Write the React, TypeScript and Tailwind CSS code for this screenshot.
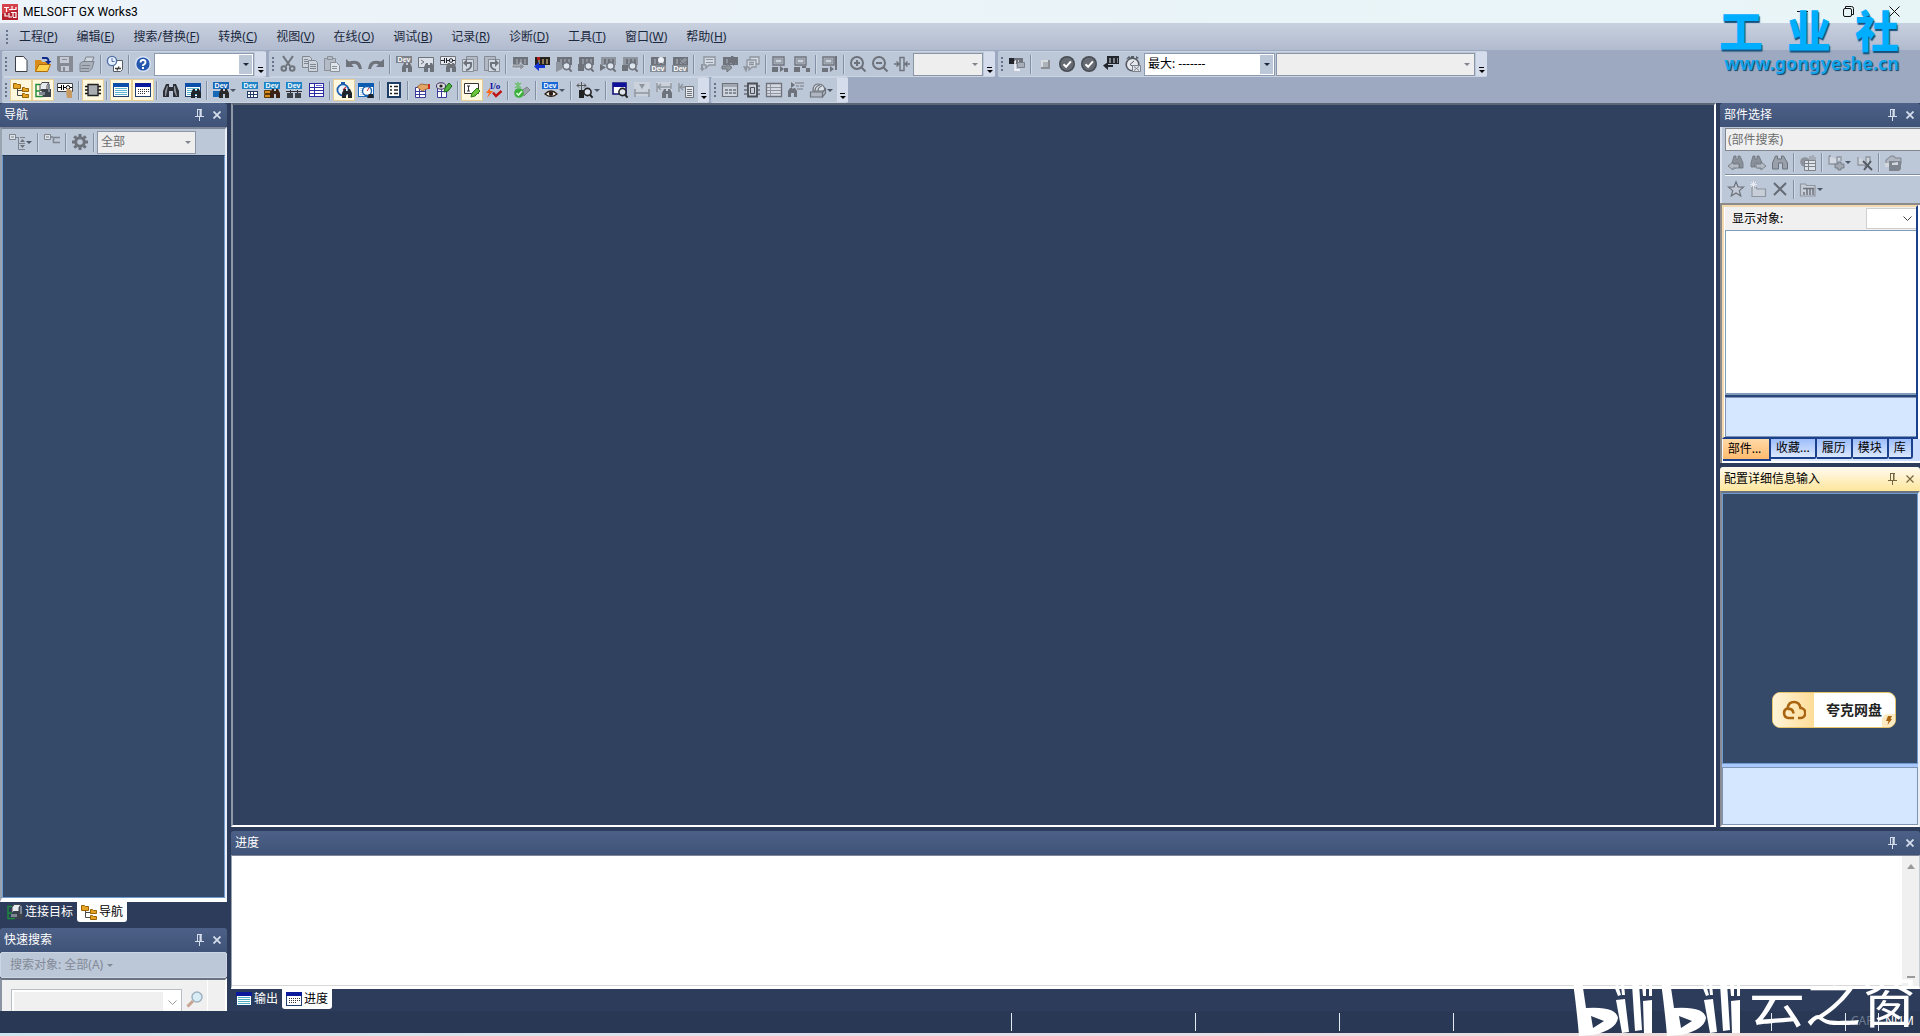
import type { ReactNode } from "react";
import clsx from "clsx";

const G = "#6d727b";
const L = "#8f959f";
const K = "#22262c";

// ---------- shared bits of the toolbar glyphs ----------

const lens = (c = G) => (
  <g fill="#dfe5ee" stroke={c} strokeWidth="1.6">
    <circle cx="10.5" cy="10" r="3.6" />
    <path d="M13 12.8l2.6 2.8" strokeWidth="2" />
  </g>
);

const binoc = (c = G) => <path fill={c} d="M6 16v-5l2-4h2v2h2V7h2l2 4v5h-4v-4h-2v4z" />;

const plc = (c = G, l = L) => (
  <g shapeRendering="crispEdges">
    <path fill={c} d="M1 1h15v8H1z" />
    <path fill={l} d="M4 3h2v5H4zM8 3h2v5H8zM12 3h2v5h-2z" />
  </g>
);

const dev = (c: string, y = 0) => (
  <g>
    <path fill={c} d={`M0 ${y}h16v7H0z`} />
    <text x="8" y={y + 6} textAnchor="middle" fontSize="7" fontWeight="700" fill="#fff" fontFamily="Liberation Sans, sans-serif">
      Dev
    </text>
  </g>
);

const win = (bar = "#0a1a9a", line = "#4f9fc4", dark = "#1f3f6e") => (
  <g shapeRendering="crispEdges">
    <path fill={dark} d="M0 1h16v14H0z" />
    <path fill="#fff" d="M1 5h14v9H1z" />
    <path fill={bar} d="M0 1h16v4H0z" />
    <path stroke={line} d="M2 6.5h12M2 8.5h12M2 10.5h12M2 12.5h12" />
  </g>
);

const check = (
  <g>
    <circle cx="8" cy="8" r="8" fill="#474c53" />
    <circle cx="8" cy="8" r="6.5" fill="#666b73" />
    <path fill="none" stroke="#fff" strokeWidth="2" d="M4.500 8.200l2.600 2.600 4.800-5.400" />
  </g>
);

const monitor = (
  <g fill="none" stroke={G} strokeWidth="1.4">
    <path fill="#c9d1dc" d="M1 1h11v8H1z" />
    <path d="M3 3h7v4H3z" stroke={L} />
  </g>
);

const icons: Record<string, ReactNode> = {
  new: <path fill="#fff" stroke="#3b3f47" d="M2.5.5h8l3.5 4v11H2.5z" />,
  open: (
    <g>
      <path fill="#d98b1c" d="M0 4h6l1 2h6v9H0z" />
      <path fill="#ffd24d" stroke="#b06c0b" d="M.5 15.5L4 8.500h11.500l-3 7z" />
      <path fill="none" stroke="#0d2a8c" strokeWidth="2" d="M7 2h4q2.500 0 2.500 4" />
      <path fill="#0d2a8c" d="M10 5h6.500l-3.200 3.500z" />
    </g>
  ),
  save: (
    <g>
      <path fill="#868b93" d="M0 0h16v16H2l-2-2z" />
      <path fill="#c3cad5" d="M3 1h9v6H3zM4 10h8v5H4z" />
      <path fill="#868b93" d="M5 3h5v1H5zM6 11h2v4H6z" />
    </g>
  ),
  print: (
    <g stroke="#7d838c" fill="#cfd5de">
      <path d="M5 6l2-5h8l-2 5z" />
      <path d="M1 7.500l3-2h11l-2 7-3 3H1z" fill="#a9b0ba" />
      <path d="M3 9.500h8M2 12.500h8" />
    </g>
  ),
  recent: (
    <g>
      <path fill="#fff" stroke="#555b66" d="M6.5 4.5h9v9l-2 2h-7z" />
      <circle cx="5" cy="5" r="4.600" fill="#e7f0ff" stroke="#5270a6" strokeWidth="1.400" />
      <path fill="none" stroke="#5270a6" d="M5 2v3.500h2.500" />
      <path fill="none" stroke="#444" strokeWidth="1.300" d="M8 12.500h6M12 10.500l-2 4" />
    </g>
  ),
  help: (
    <g>
      <circle cx="8" cy="8" r="8" fill="#d9e4f7" />
      <circle cx="8" cy="8" r="6.600" fill="#2456b0" />
      <path fill="none" stroke="#fff" strokeWidth="1.800" d="M5.500 6.500q0-2.500 2.500-2.500t2.500 2-2.500 3v1" />
      <path fill="#fff" d="M7 11h2v2H7z" />
    </g>
  ),
  cut: (
    <g fill="none" stroke={G} strokeWidth="2">
      <path d="M3 0l7 10M13 0L6 10" />
      <circle cx="3.800" cy="12.500" r="2.300" />
      <circle cx="12.200" cy="12.500" r="2.300" />
    </g>
  ),
  copy: (
    <g fill="#ccd3dd" stroke="#81878f">
      <path d="M.5.5h7l2 2v9h-9z" />
      <path d="M6.500 4.500h7l2 2v9h-9z" />
      <path d="M8 8.500h6M8 10.500h6M8 12.500h6M2 3.500h4M2 5.500h4M2 7.500h4" />
    </g>
  ),
  paste: (
    <g stroke="#8b9199" fill="#b5bcc7">
      <path d="M.5 2.500h11v12H.5z" />
      <path d="M3.500.5h5v3h-5z" />
      <path fill="#dfe4eb" d="M6.500 6.500h6l3 3v6h-9z" />
      <path d="M8 10.500h5M8 12.500h5" />
    </g>
  ),
  undo: <path fill={G} d="M0 3v8h8L5.500 8.500Q11 6 13 13h3Q15 2 3 5.500z" />,
  redo: <path fill={G} d="M16 3v8H8l2.500-2.500Q5 6 3 13H0Q1 2 13 5.500z" />,
  devFind: <g>{dev("#7d828b")}{binoc()}</g>,
  cmdFind: (
    <g>
      <path fill="#dde2ea" stroke={G} d="M.5 1.500h15v10H.5z" />
      <path fill="none" stroke={G} d="M3 4l3 2-3 2M7 8.500h3" />
      {binoc()}
    </g>
  ),
  ladFind: (
    <g>
      <path fill="#e6e9ef" stroke={G} d="M.5.5h15v8H.5z" />
      <path fill="none" stroke={K} d="M1 4.500h3M4.500 2v5M6.500 2v5M7 4.500h3M12 4.500h3" />
      <circle cx="11" cy="4.500" r="1.800" fill="none" stroke={K} />
      {binoc()}
    </g>
  ),
  backDoc: (
    <g>
      <path fill="#b3bac5" stroke="#868c95" d="M4.500.5h11v14h-11z" />
      <path fill="#d4dae3" stroke="#868c95" d="M.5 3.500h11v12H.5z" />
      <path fill="none" stroke={G} strokeWidth="2" d="M4 14q6-1 5-7H4" />
      <path fill={G} d="M5 3v8L1 7z" />
    </g>
  ),
  fwdDoc: (
    <g>
      <path fill="#b3bac5" stroke="#868c95" d="M.5.5h11v14H.5z" />
      <path fill="#d4dae3" stroke="#868c95" d="M4.500 3.500h11v12h-11z" />
      <path fill="none" stroke={G} strokeWidth="2" d="M12 14q-6-1-5-7h5" />
      <path fill={G} d="M11 3v8l4-4z" />
    </g>
  ),
  plcWrite: (
    <g>
      {plc()}
      <path fill={L} d="M0 9h8V6.500l5 4-5 4V12H0z" stroke="#dfe4eb" strokeWidth=".6" />
    </g>
  ),
  plcRead: (
    <g>
      {plc("#26221c", "#8c7a5c")}
      <path fill="#b01c1c" d="M3 1h3v3H3z" />
      <path fill="#1234d6" d="M11 9H5V6l-5 4.500L5 15v-3h6z" />
    </g>
  ),
  plcWatch1: <g>{plc()}<path fill={L} d="M0 6h6v7l-6 3z" />{lens()}</g>,
  plcWatch2: <g>{plc()}<path fill={G} d="M0 8h6v7H0z" />{lens()}</g>,
  plcWatch3: <g>{plc(L, G)}<path fill={G} d="M0 8l6 3.500L0 15z" />{lens()}</g>,
  plcWatch4: <g>{plc(L, G)}<path fill={G} d="M0 9h6v6H0z" />{lens()}</g>,
  devSnap: <g>{plc()}<circle cx="11" cy="4" r="3" fill="#eef1f5" />{dev("#858b94", 9)}</g>,
  devEdit: <g>{plc()}<path fill={L} stroke={G} d="M8 5l5-4 3 3-5 4z" />{dev("#858b94", 9)}</g>,
  comment1: (
    <g>
      <path fill="#d5dbe4" stroke={L} strokeWidth="1.400" d="M4 1h11v8H9l-3 3V9H4z" />
      <path stroke={L} d="M6 3.500h7M6 6.500h7" />
      <path fill={L} d="M1 8h2v4h2l-3 3.500L0 12h1z" />
    </g>
  ),
  comment2: (
    <g>
      {plc()}
      <path fill={L} stroke={G} d="M0 10h5V7l5 4.500L5 16v-3H0z" />
      <path fill={G} d="M9 0h2l5 5-5 5V7H8V3h1z" />
    </g>
  ),
  comment3: (
    <g fill="#d5dbe4" stroke={L} strokeWidth="1.300">
      <path d="M6 1h9v7H6z" />
      <path d="M3 4h9v7H8l-3 3v-3H3z" />
      <path d="M5 6.500h5M5 8.500h5" />
      <path fill={L} d="M0 11h3l-1 4z" />
    </g>
  ),
  mon1: <g>{monitor}<path fill={G} d="M0 11h6v5H0zM8 10l4 3-4 3zM12 12h4v4h-4z" /></g>,
  mon2: <g>{monitor}<path fill={G} d="M0 11h6v5H0zM8 10h4v2H8zM12 12h4v4h-4z" /></g>,
  mon3: <g>{monitor}<path fill={G} d="M0 12h6v4H0zM8 10l4 3-4 3zM13 0h2v14h-2z" /></g>,
  zoomIn: (
    <g fill="none" stroke={G} strokeWidth="2">
      <circle cx="7" cy="7" r="6" />
      <path d="M4 7h6M7 4v6M11.500 11.500L15.500 15.500" />
    </g>
  ),
  zoomOut: (
    <g fill="none" stroke={G} strokeWidth="2">
      <circle cx="7" cy="7" r="6" />
      <path d="M4 7h6M11.500 11.500L15.500 15.500" />
    </g>
  ),
  fitWidth: (
    <path
      fill="none"
      stroke={G}
      strokeWidth="1.400"
      d="M6 1.500h4v13H6zM0 8h5M16 8h-5M2.500 5.500L5 8l-2.500 2.500M13.500 5.500L11 8l2.500 2.500"
    />
  ),
  plcLink: (
    <g>
      <path fill={K} d="M0 2h5v6H0z" />
      <path fill={G} d="M5 2h9v6H5z" />
      <path fill="#c9cfd8" d="M6 4h1v3H6zM9 4h1v3H9z" />
      <path fill="#a7aeb8" stroke="#7b818a" d="M8.500 6.500h7v5h-7z" />
      <path fill="none" stroke="#fff" strokeWidth="1.300" d="M6 5v9h5" />
    </g>
  ),
  stop: (
    <g>
      <path fill="#8a8f96" d="M4 4h9v9H4z" />
      <path fill="#d8dbe0" d="M4 4h7v7H4z" />
      <path fill="#aeb3ba" d="M6 6h5v5H6z" />
    </g>
  ),
  ok: check,
  plcBack: (
    <g>
      <path fill={K} d="M4 0h12v8H4z" />
      <path fill="#7e848c" d="M6 2h2v5H6zM10 2h2v5h-2zM14 2h1v5h-1z" />
      <path fill={K} d="M10 9H5V6L0 9.500 5 14v-3h5z" />
    </g>
  ),
  clockX: (
    <g>
      <path fill="#555b63" d="M1 3l3-3 2 2zM11 0l3 2-3 1zM6 0h3v2H6z" />
      <circle cx="7.500" cy="8.500" r="6.300" fill="#e5e8ed" stroke="#555b63" strokeWidth="1.600" />
      <path fill="none" stroke="#555b63" d="M9 5L5 8.500l3 2" />
      <path fill="#dfe3e9" stroke="#7d838c" d="M7.500 9.500h8v6h-8zM9 10.500l5 4M14 10.500l-5 4" />
    </g>
  ),
  tree: (
    <g>
      <path fill="none" stroke="#4a4a4a" d="M4.500 6v7.500h6M4.500 8.500h6" />
      <path fill="#e6a423" stroke="#9a6206" d="M.5 1.500h3l1 1h3v4h-7zM9.500 5.500h2l1 1h3v3h-6zM9.500 11.500h2l1 1h3v3h-6z" />
    </g>
  ),
  connect: (
    <g>
      <path fill="none" stroke="#1d8a3c" strokeWidth="1.400" d="M5 2.500H1v12h7M1 9h4" />
      <path fill="#e9ecef" stroke="#444a52" d="M5 3.500L7 .5h7l-2 3v5H5z" />
      <path fill="#3c424b" d="M6 7h10v8H8z" />
      <path fill="#7d8691" d="M13 2h2v8h-2zM4 10h6v3H4z" />
    </g>
  ),
  ladderHand: (
    <g>
      <path fill="#fff" stroke="#444" d="M.5 1.500h15v8H.5z" />
      <path fill="none" stroke="#000" d="M1 5.500h3M4.500 3v5M6.500 3v5M7 5.500h2M13 5.500h2" />
      <circle cx="11" cy="5.500" r="1.900" fill="none" stroke="#000" />
      <path fill="#c79a62" d="M9 9l2-3 4 3v7h-5z" />
    </g>
  ),
  chip: (
    <g>
      <path stroke="#111" strokeWidth="1.600" d="M0 4.500h16M0 8h16M0 11.500h16" />
      <path fill="#a9adb2" stroke="#222" strokeWidth="1.400" d="M3 2.500h10v11H3z" />
    </g>
  ),
  winLines: win("#0b4fa8", "#5fb4d0"),
  winDots: (
    <g>
      {win("#0a1a9a", "#fff")}
      <path fill="none" stroke="#333" strokeDasharray="1 1" d="M3 7.500h11M3 9.500h11M3 11.500h8" />
    </g>
  ),
  winOutput: win("#0a1a9a", "#4fb0c4"),
  binoc: (
    <g>
      <path fill="#2c3036" d="M0 15V9l3-7h3v3h4V2h3l3 7v6h-6V9H6v6z" />
      <path fill="#8e949c" d="M2 9l2-5h1L3 14H2zM11 9V4h1l2 10h-1z" />
    </g>
  ),
  winFind: <g>{win("#0b4fa8", "#5fb4d0")}{binoc("#1f242b")}</g>,
  devMenu: <g>{dev("#1767b8")}<path fill="#1767b8" d="M0 9h8v6H0z" />{binoc("#2a2a2a")}</g>,
  devGrid: (
    <g>
      {dev("#1b83c6")}
      <path fill="#223c66" d="M5 9h11v7H5z" />
      <path fill="#fff" d="M6 10h2v2H6zM9 10h2v2H9zM12 10h3v2h-3zM6 13h2v2H6zM9 13h2v2H9zM12 13h3v2h-3z" />
    </g>
  ),
  devFolders: (
    <g>
      {dev("#1b83c6")}
      <path fill="#d98a1f" stroke="#5d3a06" d="M.5 8.500h6v3h-6zM.5 12.500h6v3h-6z" />
      {binoc("#3b2214")}
    </g>
  ),
  devNet: (
    <g>
      {dev("#1b83c6")}
      <path stroke="#2c3036" d="M0 9.500h16M4.500 8v4M11.500 8v4" />
      <path fill="#3a4048" d="M1 11h6v5H1zM9 11h6v5H9z" />
    </g>
  ),
  tableIcon: (
    <g shapeRendering="crispEdges">
      <path fill="#2a2ba0" d="M1 1h15v14H1z" />
      <path fill="#fff" d="M2 2h4v3H2zM7 2h8v3H7zM2 6h4v2H2zM7 6h8v2H7zM2 9h4v2H2zM7 9h8v2H7zM2 12h4v2H2zM7 12h8v2H7z" />
      <path fill="#6a6ad0" d="M8 3h6v1H8z" />
    </g>
  ),
  clockFind: (
    <g>
      <path fill="#1d5fae" d="M5 0h4v2H5z" />
      <circle cx="7" cy="8" r="5.600" fill="#eaf4ff" stroke="#1d5fae" strokeWidth="1.800" />
      <path stroke="#c33" strokeWidth="1.200" d="M7 8l3-3" />
      {binoc("#1f242b")}
    </g>
  ),
  winClock: (
    <g>
      {win("#0b5bb0", "#b9d6ea", "#1a6ac0")}
      <circle cx="9" cy="9" r="4.500" fill="#fff" stroke="#1d5fae" strokeWidth="1.400" />
      <path stroke="#c33" d="M9 9l2-3" />
      <path fill="#1f242b" d="M9 16l2-4h4l1 4z" />
    </g>
  ),
  listIcon: (
    <g>
      <path fill="#fff" stroke="#1d3d66" strokeWidth="2" d="M2 1h12v14H2z" />
      <path fill="none" stroke="#222" strokeWidth="1.400" d="M4 4.500h2M4 8h2M4 11.500h2M8 4.500h4M8 8h4M8 11.500h4" />
    </g>
  ),
  propsHand: (
    <g>
      <path fill="#fff" stroke="#3a3a9c" d="M1.500 5.500h10v10h-10zM1 9.500h10M5.500 6v9M1 12.500h10" />
      <path fill="#e2a565" stroke="#8c4f19" strokeWidth=".7" d="M3 5l4-3 8 1v3l-7 3z" />
      <path fill="#d02a1e" d="M14 2h2v5h-2z" />
    </g>
  ),
  eyePen: (
    <g>
      <path fill="#fff" stroke="#3a3a9c" d="M1.500 5.500h9v10h-9zM1 9.500h9M5.500 6v9" />
      <ellipse cx="5" cy="4" rx="4.500" ry="3.200" fill="#ddd" stroke="#3b2f66" />
      <circle cx="5" cy="4" r="1.600" fill="#222" />
      <path fill="#4db33d" stroke="#1c661b" d="M8 10l1-4 4-5 3 3-4 5z" />
    </g>
  ),
  boxPen: (
    <g>
      <path fill="#fff" stroke="#333" d="M.5 1.500h14v10H.5z" />
      <path stroke="#333" d="M4.500 4v5M3 4h3M3 9h3" />
      <path fill="#6cc43c" stroke="#2a7a17" d="M7 15l1-4 5-5 3 3-5 5z" />
    </g>
  ),
  ioCheck: (
    <g>
      <text x="9" y="7" textAnchor="middle" fontSize="9" fontWeight="700" fill="#1414a0" fontFamily="Liberation Serif, serif">
        I/o
      </text>
      <path fill="#ff6a1a" d="M4 6L0 11h3l-2 5 6-7H4z" />
      <path fill="none" stroke="#c01515" strokeWidth="2.400" d="M7 10.500l3 3.500 5.500-5" />
    </g>
  ),
  greenCheck: (
    <g>
      <path fill="#9aa1a9" stroke="#6b7178" strokeWidth=".7" d="M7 9l6-4 3 3-6 6z" />
      <circle cx="5" cy="11" r="4.800" fill="#3cae3c" />
      <path fill="none" stroke="#d9ffd9" strokeWidth="1.600" d="M2.500 11l2 2 3.500-4" />
      <path stroke="#6fc06f" strokeWidth="1.600" d="M1 1l6 5M7 1L1 6M4 0v6" />
    </g>
  ),
  devEye: (
    <g>
      {dev("#1767d8")}
      <path fill="#fff" stroke="#2b1d12" strokeWidth="1.200" d="M3 12q6-6 12 0-6 5-12 0z" />
      <circle cx="9" cy="11.800" r="2.200" fill="#2b1d12" />
    </g>
  ),
  ampLens: (
    <g>
      <path fill="none" stroke="#555" d="M4.500 0v8M0 3.500h9M2 1.500l-2 2 2 2M7 1.500l2 2-2 2" />
      <path fill="#222" d="M2 8h5v8H2z" />
      {lens("#222")}
    </g>
  ),
  winLens: (
    <g>
      <path fill="#fff" stroke="#10107a" strokeWidth="1.600" d="M1 1h13v11H1z" />
      <path fill="#10109a" d="M1 1h13v4H1z" />
      {lens("#222")}
    </g>
  ),
  span: (
    <g>
      <path fill="#ccd2dc" d="M0 0h16v14H0z" />
      <path stroke={L} strokeWidth="1.500" d="M1 7v8M15 7v8M1 11h14" />
      <path fill={L} d="M5 2h6L8 7z" />
    </g>
  ),
  spanFind: (
    <g>
      <path fill="#ccd2dc" d="M0 0h16v9H0z" />
      <path fill="none" stroke={L} strokeWidth="1.400" d="M1 1v9M1 5h14M5 2L2 5l3 3M15 1v6" />
      {binoc()}
    </g>
  ),
  spanList: (
    <g>
      <path fill="none" stroke={L} strokeWidth="1.400" d="M1 1v9M1 5h8M5 2L2 5l3 3" />
      <path fill="#e6e9ee" stroke={G} d="M7.500 4.500h8v11h-8zM9 7.500h5M9 9.500h5M9 11.500h5M9 13.500h5" />
    </g>
  ),
  modTable: (
    <g>
      <path fill="#cfd5de" stroke={G} strokeWidth="1.200" d="M.5 1.500h15v13H.5z" />
      <path fill="#a1a8b2" d="M1 2h14v3H1z" />
      <path stroke={G} strokeDasharray="3 1" strokeWidth="1.500" d="M3 8h11M3 11h11" />
    </g>
  ),
  modChip: (
    <g>
      <path stroke={G} strokeWidth="1.500" d="M0 4h16M0 8h16M0 12h16" />
      <path fill="#c9cfd9" stroke="#4a4f57" strokeWidth="1.800" d="M4 1.500h9v13H4z" />
      <path fill="none" stroke="#4a4f57" d="M6.500 5.500h4v6h-4z" />
    </g>
  ),
  modList: (
    <g>
      <path fill="#d5dae2" stroke={G} strokeWidth="1.300" d="M.5 1.500h15v13H.5z" />
      <path stroke={L} d="M1 5.500h14M1 8.500h14M1 11.500h14M4.500 2v12" />
    </g>
  ),
  modFind: (
    <g>
      <path fill={G} d="M0 15V9l2-3h2l1 1 1-1h1l2 3v6H6v-4H3v4zM3 0l4 3-4 3z" />
      <path stroke={L} strokeWidth="1.300" d="M7 1h9M8 4h3M12 4h4M9 7h6" />
    </g>
  ),
  modBox: (
    <g fill="#d9dee6" stroke={G} strokeWidth="1.200">
      <path d="M3 9q0-7 5-7 7 0 7 7z" />
      <path d="M8 9q0-4 4-5M5 9q0-5 5-6" fill="none" />
      <path d="M.5 10h12v5H.5zM12.500 10l3-3v4l-3 4z" fill="#b0b7c2" />
    </g>
  ),
  expand: (
    <g fill="none" stroke="#7f858e">
      <path fill="#dfe3ea" d="M.5.5h6v5h-6zM2 3h3" />
      <path d="M7 3.500h2.500v12H12M9.500 9.500H12M11 3.500h5M11 9.500h5M12 15.500h4" />
      <path fill={G} d="M11 8l2.500-3L16 8zM11 11l2.500 3 2.500-3z" stroke="none" />
    </g>
  ),
  collapse: (
    <g fill="none" stroke="#7f858e">
      <path fill="#dfe3ea" d="M.5.5h6v5h-6zM2 3h3" />
      <path strokeWidth="1.500" d="M7 3h2M16 3.500H9.500v5H16" />
    </g>
  ),
  gear: (
    <g>
      <circle cx="8" cy="8" r="4.300" fill="none" stroke={G} strokeWidth="3" />
      <path stroke={G} strokeWidth="3" d="M8 0v3M8 13v3M0 8h3M13 8h3M2.300 2.300l2 2M11.700 11.700l2 2M2.300 13.700l2-2M11.700 4.300l2-2" />
    </g>
  ),
  findPrev: (
    <g fill="#8b919a" stroke="#6d737c" strokeWidth=".8">
      <path d="M4 8l2-7h2v3h2V1h2l3 7v5h-4V8H8v5H6z" />
      <path fill="#b4bac4" d="M0 11l5-4v2h6v4H5v2z" />
    </g>
  ),
  findNext: (
    <g fill="#8b919a" stroke="#6d737c" strokeWidth=".8">
      <path d="M1 8l2-7h2v3h2V1h2l3 7v5H8V8H5v4H1z" />
      <path fill="#b4bac4" d="M16 11l-5-4v2H6v4h5v2z" />
    </g>
  ),
  findAll: <path fill="#9aa0a9" stroke="#6d737c" d="M.5 14V8l3-7h2v3h4V1h2l4 7v6h-5V8h-4v6z" />,
  globeGrid: (
    <g>
      <circle cx="5" cy="7" r="4.800" fill="#8d939c" />
      <path fill="#a5abb4" d="M9 1h3V0h2v2h2v3H9z" />
      <path fill="#dfe3e9" stroke="#7d838b" d="M4.500 5.500h11v10h-11zM5 8.500h10M5 11.500h10M8.500 6v9" />
    </g>
  ),
  addTo: (
    <g>
      <path fill="#d3d9e2" stroke={L} strokeWidth="1.300" d="M1 1v8h6l2 3V2h4v4M1 1h2" />
      <path fill="#a3a9b2" stroke={G} strokeWidth=".8" d="M7 9h3V7h3v2h3v4h-3v2h-3v-2H7z" />
    </g>
  ),
  delFrom: (
    <g>
      <path fill="#cdd4dd" stroke={L} strokeWidth="1.300" d="M1 2v8h6l2 2V2h4v6" />
      <path stroke="#555b63" strokeWidth="2" d="M6 6l9 9M14 6l-7 9" />
    </g>
  ),
  boxDark: (
    <g>
      <path fill="#b0b6c0" stroke="#7d838b" d="M1 5l5-4h3l1 2h6v6H1z" />
      <path fill="#7f858e" d="M4 6h12v8l-2 2H4z" />
      <path fill="#d3d8df" d="M0 8h4v4H0zM7 8l6-1v3H7z" />
    </g>
  ),
  star: <path fill="#c3cad5" stroke={G} strokeWidth="1.200" d="M8 .8l2 5 5.500.3-4.200 3.500 1.400 5.400L8 12l-4.700 3 1.400-5.400L.5 6.100 6 5.800z" />,
  folder: (
    <g>
      <path fill="#c8ced8" stroke={L} strokeWidth="1.200" d="M2 6h4l1 2h8.500v7.500H2z" />
      <path stroke="#e6eaf0" d="M0 3.500h7M3.500 0v7M1 1l5 5M6 1L1 6" />
    </g>
  ),
  cross: <path stroke="#666c75" strokeWidth="2" d="M2 2l12 12M14 2L2 14" />,
  folderChart: (
    <g>
      <path fill="#c8ced8" stroke={L} strokeWidth="1.200" d="M.5 3h5l1 1.500H15V15H.5z" />
      <path stroke={G} strokeWidth="1.500" d="M4 14v-3M7 14V8M10 14V7M13 14V7M3 7.500h11" />
    </g>
  ),
};

function Icon({ name }: { name: string }) {
  return (
    <svg viewBox="0 0 16 16" className="h-4 w-4 shrink-0 overflow-visible" fill="none" aria-hidden="true">
      {icons[name]}
    </svg>
  );
}

// ---------- toolbar building blocks ----------

// "|" is a separator, "*" marks a pressed toggle, "+" a drop-down button
type Item = string;

function Caret({ className = "text-[#4d5766]" }: { className?: string }) {
  return (
    <svg viewBox="0 0 6 3" className={clsx("h-[3px] w-[6px] shrink-0", className)} aria-hidden="true">
      <path fill="currentColor" d="M0 0h6L3 3z" />
    </svg>
  );
}

function Tools({ items }: { items: Item[] }) {
  return (
    <>
      {items.map((item, i) => {
        if (item === "|") {
          return <span key={i} className="mx-[2px] h-[19px] w-[2px] shrink-0 border-l border-[#8290a6] border-r border-r-[#cfd8e5]" />;
        }
        const pressed = item.startsWith("*");
        const drop = item.startsWith("+");
        const name = item.replace(/^[*+]/, "");
        return (
          <button
            key={i}
            type="button"
            aria-label={name}
            aria-pressed={pressed || undefined}
            className={clsx(
              "flex h-[22px] shrink-0 items-center justify-center",
              drop ? "w-[29px] gap-px" : "w-[22px]",
              pressed && "border border-[#e5cf94] bg-[#fff8de]"
            )}
          >
            <Icon name={name} />
            {drop && <Caret />}
          </button>
        );
      })}
    </>
  );
}

function Grip() {
  return (
    <span className="flex w-[8px] shrink-0 flex-col items-center gap-[2px]">
      {[0, 1, 2, 3].map((n) => (
        <span key={n} className="h-[2px] w-[2px] bg-[#66758c]" />
      ))}
    </span>
  );
}

function Toolbar({ children }: { children: ReactNode }) {
  return (
    <div role="toolbar" className="flex h-[26px] shrink-0 items-center rounded-[2px] border-y border-[#cbd4e2] bg-[#bcc7d8]">
      <Grip />
      {children}
      <button type="button" aria-label="more" className="ml-px flex h-full w-[11px] flex-col items-center justify-end gap-[2px] bg-[#d5dceb] pb-[3px]">
        <span className="h-px w-[5px] bg-black" />
        <Caret className="text-black" />
      </button>
    </div>
  );
}

function Combo({ label, width, value = "", disabled }: { label: string; width: string; value?: string; disabled?: boolean }) {
  return (
    <div className={clsx("flex h-[23px] shrink-0 border", width, disabled ? "border-[#8b95a5] bg-[#eee]" : "border-[#8d9bb0] bg-white")}>
      <select aria-label={label} disabled={disabled} className="min-w-0 flex-1 appearance-none bg-transparent px-[3px] text-[12px] text-black outline-none disabled:opacity-100 disabled:text-[#6d6d6d]">
        <option>{value}</option>
      </select>
      <span className={clsx("my-px mr-px flex w-[13px] items-center justify-center", !disabled && "bg-[#bcc7d8]")}>
        <Caret className={disabled ? "text-[#80858d]" : "text-[#1b2a41]"} />
      </span>
    </div>
  );
}

// ---------- dock panels ----------

function PanelHeader({ title, active }: { title: string; active?: boolean }) {
  return (
    <header
      className={clsx(
        "flex h-[24px] shrink-0 items-center rounded-t-[3px] pl-1 pr-[2px] text-[12px] leading-4",
        active
          ? "bg-linear-to-b from-[#fffaf0] via-[#fff0c5] to-[#ffe69c] text-black"
          : "bg-linear-to-b from-[#4d6087] to-[#3f5277] text-white"
      )}
    >
      <h2 className="flex-1">{title}</h2>
      <button type="button" aria-label="pin" className="flex w-[17px] justify-center">
        <svg viewBox="0 0 9 12" className={clsx("h-[12px] w-[9px]", active ? "text-[#75663f]" : "text-[#d4ddec]")} fill="none" stroke="currentColor">
          <path d="M2.500 1v6M6 1v6M2 .5h5M0 7.500h9M4.500 8v4" />
          <path d="M5.500 1v6" strokeWidth={active ? 1 : 2} />
        </svg>
      </button>
      <button type="button" aria-label="close" className="flex w-[17px] justify-center">
        <svg viewBox="0 0 8 8" className={clsx("h-[8px] w-[8px]", active ? "text-[#75663f]" : "text-[#d4ddec]")} fill="none" stroke="currentColor" strokeWidth={active ? 1.2 : 1.8}>
          <path d="M.5.5l7 7M7.500.5l-7 7" />
        </svg>
      </button>
    </header>
  );
}

function DockTab({ icon, label, active }: { icon: string; label: string; active?: boolean }) {
  return (
    <button
      type="button"
      role="tab"
      aria-selected={!!active}
      className={clsx(
        "flex h-[20px] items-center gap-[2px] whitespace-nowrap px-[4px] text-[12px] leading-4",
        active ? "rounded-b-[3px] bg-white text-black" : "text-white"
      )}
    >
      <Icon name={icon} />
      {label}
    </button>
  );
}

const menus = [
  ["工程", "P"],
  ["编辑", "E"],
  ["搜索/替换", "F"],
  ["转换", "C"],
  ["视图", "V"],
  ["在线", "O"],
  ["调试", "B"],
  ["记录", "R"],
  ["诊断", "D"],
  ["工具", "T"],
  ["窗口", "W"],
  ["帮助", "H"],
];

function TitleBar() {
  return (
    <header className="flex h-[23px] shrink-0 items-center bg-linear-to-r from-[#edf3fa] to-[#e8f5f7] pl-[2px] pr-[20px]">
      <svg viewBox="0 0 16 16" className="h-4 w-4" fill="none" aria-hidden="true">
        <path fill="#b3202b" d="M0 0h16v16H0z" />
        <path fill="#d4434b" d="M0 0h16v5L0 10z" />
        <path stroke="#fff" strokeWidth="1.200" d="M2 3.500h5M4.500 3.500V8M7 5.500h3V2M7 9v4h3M10 5.500h4M14 3v3M3 9v3h3M9 8.500h5v5h-3M11 8v5" />
      </svg>
      <h1 className="ml-[5px] flex-1 font-['Roboto',sans-serif] text-[12px] leading-4 text-black">MELSOFT GX Works3</h1>
      <div className="flex items-center gap-[35px]">
        <button type="button" aria-label="minimize" className="h-[11px] w-[11px]">
          <svg viewBox="0 0 11 11" stroke="#111"><path d="M0 5.500h11" /></svg>
        </button>
        <button type="button" aria-label="restore" className="h-[11px] w-[11px]">
          <svg viewBox="0 0 11 11" fill="none" stroke="#111">
            <rect x=".5" y="2.500" width="8" height="8" rx="1.500" />
            <path d="M2.500 2V.5H8.500Q10.500.5 10.500 2.500V8.500H9" />
          </svg>
        </button>
        <button type="button" aria-label="close window" className="h-[11px] w-[11px]">
          <svg viewBox="0 0 11 11" stroke="#111"><path d="M.5.5l10 10M10.500.5l-10 10" /></svg>
        </button>
      </div>
    </header>
  );
}

function MenuBar() {
  return (
    <nav className="flex h-[27px] shrink-0 items-center bg-linear-to-b from-[#c9d1df] to-[#b1bbcf] pl-[3px]">
      <Grip />
      <div className="ml-[8px] flex gap-[19px]">
        {menus.map(([text, key]) => (
          <button key={key} type="button" className="whitespace-nowrap text-[12px] leading-4 text-[#1b293e]">
            {text}(<u>{key}</u>)
          </button>
        ))}
      </div>
    </nav>
  );
}

function Toolbars() {
  return (
    <div className="flex h-[53px] shrink-0 flex-col bg-[#9ca9c0] pl-[2px] pt-px">
      <div className="flex gap-[3px]">
        <Toolbar>
          <Tools items={["new", "open", "save", "print", "|", "recent", "|", "help"]} />
          <Combo label="help search" width="w-[100px]" />
        </Toolbar>
        <Toolbar>
          <Tools
            items={[
              "cut", "copy", "paste", "undo", "redo", "|",
              "devFind", "cmdFind", "ladFind", "backDoc", "fwdDoc", "|",
              "plcWrite", "plcRead", "plcWatch1", "plcWatch2", "plcWatch3", "plcWatch4", "|",
              "devSnap", "devEdit", "|",
              "comment1", "comment2", "comment3", "|",
              "mon1", "mon2", "|",
              "mon3", "|",
              "zoomIn", "zoomOut", "fitWidth",
            ]}
          />
          <Combo label="zoom" width="w-[70px]" disabled />
        </Toolbar>
        <Toolbar>
          <Tools items={["plcLink", "|", "stop", "ok", "ok", "plcBack", "clockX"]} />
          <Combo label="scan time" width="w-[131px]" value="最大: -------" />
          <span className="w-px" />
          <Combo label="target" width="w-[199px]" disabled />
        </Toolbar>
      </div>
      <div className="flex gap-[2px]">
        <Toolbar>
          <Tools
            items={[
              "*tree", "*connect", "ladderHand", "|",
              "*chip", "|",
              "*winLines", "*winDots", "|",
              "binoc", "winFind", "|",
              "+devMenu", "devGrid", "devFolders", "devNet", "tableIcon", "|",
              "*clockFind", "winClock", "|",
              "listIcon", "|",
              "propsHand", "eyePen", "|",
              "*boxPen", "ioCheck", "|",
              "greenCheck", "|",
              "+devEye", "|",
              "+ampLens", "|",
              "winLens", "span", "spanFind", "spanList",
            ]}
          />
        </Toolbar>
        <Toolbar>
          <Tools items={["modTable", "modChip", "modList", "modFind", "+modBox"]} />
        </Toolbar>
      </div>
    </div>
  );
}

function LeftDock() {
  return (
    <aside className="flex w-[227px] shrink-0 flex-col">
      <section className="flex min-h-0 flex-1 flex-col">
        <PanelHeader title="导航" />
        <div className="flex min-h-0 flex-1 flex-col border-2 border-b-4 border-b-white border-l-[#9aa3b0] border-r-[#e9eef6] border-t-[#7d8695]">
          <div className="flex h-[26px] shrink-0 items-center bg-[#bcc7d8] pl-[4px]">
            <Tools items={["+expand", "|", "collapse", "|", "gear", "|"]} />
            <Combo label="导航筛选" width="w-[99px]" value="全部" disabled />
          </div>
          <div className="min-h-0 flex-1 border border-[#6f9bd0] border-t-[#25395b] bg-[#354969]" />
        </div>
      </section>
      <div role="tablist" className="flex h-[26px] shrink-0 pl-[3px]">
        <DockTab icon="connect" label="连接目标" />
        <DockTab icon="tree" label="导航" active />
      </div>
      <section className="flex h-[83px] shrink-0 flex-col overflow-hidden">
        <PanelHeader title="快速搜索" />
        <div className="flex h-[26px] shrink-0 items-center rounded-[2px] border border-[#cbd4e2] bg-[#bcc7d8] pl-[9px]">
          <button type="button" className="flex items-center gap-[4px] text-[12px] leading-4 text-[#828a96]">
            搜索对象: 全部(A)
            <Caret className="text-[#828a96]" />
          </button>
        </div>
        <div className="flex min-h-0 flex-1 border-2 border-b-0 border-l-[#8a93a1] border-r-white border-t-[#6b7380] bg-[#f0f0f0] pl-[9px] pt-[9px]">
          <div className="flex h-[30px] w-[171px] border border-[#b9bdc4] bg-white p-[2px]">
            <input aria-label="搜索" className="w-[149px] bg-[#f0f0f0] outline-none" />
            <svg viewBox="0 0 9 5" className="ml-[5px] mt-[8px] h-[5px] w-[9px]" fill="none" stroke="#9a9a9a"><path d="M.5.5l4 4 4-4" /></svg>
          </div>
          <button type="button" aria-label="search" className="ml-[4px] mt-[2px] h-[17px] w-[17px]">
            <svg viewBox="0 0 17 17" fill="none">
              <path stroke="#c7a490" strokeWidth="3" d="M1.500 15.500L7 10" />
              <circle cx="11" cy="6" r="5" fill="#d9edf7" stroke="#9fb2c0" strokeWidth="1.500" />
            </svg>
          </button>
          <span className="ml-[4px] -mt-[9px] w-px bg-white" />
        </div>
      </section>
    </aside>
  );
}

const partTabs = ["部件...", "收藏...", "履历", "模块", "库"];

function RightDock() {
  return (
    <aside className="flex w-[200px] shrink-0 flex-col gap-[4px]">
      <section className="flex h-[360px] shrink-0 flex-col overflow-hidden">
        <PanelHeader title="部件选择" />
        <div className="flex shrink-0 flex-col border-l-2 border-[#dbe1ec] bg-[#bcc7d8] pl-[3px] pt-px">
          <input
            aria-label="部件搜索"
            placeholder="(部件搜索)"
            className="h-[23px] w-full border border-r-0 border-[#81868f] bg-[#f0f0f0] px-[2px] text-[12px] outline-none placeholder:text-[#6d6d6d]"
          />
          <div className="flex h-[24px] items-center border-b border-[#7f8da3] shadow-[0_1px_0_#fff]">
            <Tools items={["findPrev", "findNext", "findAll", "|", "globeGrid", "|", "+addTo", "delFrom", "|", "boxDark"]} />
          </div>
          <div className="flex h-[28px] items-center">
            <Tools items={["star", "folder", "cross", "|", "+folderChart"]} />
          </div>
        </div>
        <div className="flex min-h-0 flex-1 flex-col border-l-2 border-t-2 border-[#8d8a8a] bg-white">
          <div className="mr-[2px] flex min-h-0 flex-1 flex-col border-2 border-[#f3d9b0] border-b-[#1c418c] border-r-[#1c418c] pl-px">
            <div className="flex h-[23px] shrink-0 items-center bg-[#f0f0f0] pl-[7px]">
              <label htmlFor="show-target" className="flex-1 text-[12px] leading-4 text-black">显示对象:</label>
              <div className="flex h-[21px] w-[50px] items-center border border-r-0 border-[#cfcfcf] bg-white">
                <select id="show-target" className="min-w-0 flex-1 appearance-none outline-none" />
                <svg viewBox="0 0 9 5" className="mr-[4px] h-[5px] w-[9px]" fill="none" stroke="#444"><path d="M.5.5l4 4 4-4" /></svg>
              </div>
            </div>
            <div className="min-h-0 flex-1 border border-b-2 border-r-0 border-[#7f9db9] bg-white" />
            <div className="h-[2px] bg-[#2a4678]" />
            <div className="h-[40px] shrink-0 border border-r-0 border-[#7f93b5] bg-[#d5e6ff]" />
          </div>
          <div role="tablist" className="mb-[2px] flex h-[22px] shrink-0 bg-linear-to-r from-[#f4f8ff] to-[#c9dcff] pl-px">
            {partTabs.map((t, i) => (
              <button
                key={t}
                type="button"
                role="tab"
                aria-selected={i === 0}
                className={clsx(
                  "whitespace-nowrap border-b-2 border-r-2 text-[12px] leading-4 text-black",
                  i === 0
                    ? "w-[48px] border-[#1c418c] bg-linear-to-b from-[#ffd9a6] to-[#ffbb6e] pr-[3px]"
                    : "mb-[2px] rounded-br-[3px] border-[#1c418c] bg-linear-to-b from-[#9dbdf9] to-[#dbe8ff] px-[5px]"
                )}
              >
                {t}
              </button>
            ))}
          </div>
        </div>
      </section>
      <section className="flex min-h-0 flex-1 flex-col">
        <PanelHeader title="配置详细信息输入" active />
        <div className="flex min-h-0 flex-1 flex-col border-2 border-b-[#fff] border-l-[#8c8c96] border-r-[#e9eef6] border-t-[#6b7380] bg-[#a9c8fb]">
          <div className="min-h-0 flex-1 border border-[#6f9bd0] bg-[#354969]" />
          <div className="mt-[3px] h-[58px] shrink-0 border border-[#7f93b5] bg-[#d5e6ff]" />
        </div>
      </section>
    </aside>
  );
}

function ProgressPanel() {
  return (
    <section className="flex h-[180px] shrink-0 flex-col">
      <PanelHeader title="进度" />
      <div className="flex min-h-0 flex-1 border border-b-[3px] border-b-white border-l-[#9aa3b0] border-r-[#c7ccd4] border-t-[#7d8695] bg-white">
        <div className="flex-1 border-b border-[#d8d8d8]" />
        <div className="flex w-[17px] flex-col items-center justify-between bg-[#f0f0f0] py-[8px]">
          <svg viewBox="0 0 8 5" className="h-[5px] w-[8px]"><path fill="#9a9a9a" d="M0 5h8L4 0z" /></svg>
          <span className="h-[2px] w-[8px] bg-[#9a9a9a]" />
        </div>
      </div>
      <div role="tablist" className="flex h-[22px] shrink-0 pl-px">
        <DockTab icon="winOutput" label="输出" />
        <DockTab icon="winDots" label="进度" active />
      </div>
    </section>
  );
}

function StatusBar() {
  return (
    <footer className="flex h-[22px] shrink-0 items-center justify-end bg-[#293955] text-[12px] leading-4 text-white">
      <span className="h-[18px] w-[184px] border-l border-[#e5e9f0]" />
      <span className="h-[18px] w-[144px] border-l border-[#e5e9f0]" />
      <span className="h-[18px] w-[114px] border-l border-[#e5e9f0]" />
      <span className="h-[18px] w-[318px] border-l border-[#e5e9f0]" />
      <span className="h-[18px] w-[74px] border-l border-[#e5e9f0]" />
      <span className="h-[18px] w-[33px] border-l border-[#e5e9f0] pl-[5px] text-[#6e7a90]">CAP</span>
      <span className="h-[18px] w-[42px] border-l border-[#e5e9f0] pl-[6px]">NUM</span>
    </footer>
  );
}

// ---------- things floating above the window ----------

function SiteMark() {
  return (
    <div className="pointer-events-none absolute right-[21px] top-[8px] flex w-[180px] flex-col text-[#00aeff]">
      <div className="flex justify-between text-[44px] font-black leading-[46px] [text-shadow:1px_2px_1px_#14507c]">
        <span>工</span>
        <span>业</span>
        <span>社</span>
      </div>
      <span className="self-end whitespace-nowrap text-[18px] font-bold leading-[18px] text-[#12a3ea] [text-shadow:1px_1px_1px_#0d3f66]">www.gongyeshe.cn</span>
    </div>
  );
}

function QuarkBadge() {
  return (
    <button
      type="button"
      className="absolute right-[24px] top-[692px] flex h-[36px] w-[124px] items-stretch overflow-hidden rounded-[8px] border border-[#e9c36a] bg-white"
    >
      <span className="flex w-[41px] items-center justify-center bg-linear-to-r from-[#fff3d6] to-[#fddc97]">
        <svg viewBox="0 0 24 20" className="h-[20px] w-[24px]" fill="none" stroke="#a8640f" strokeWidth="2.600">
          <path d="M12 18H6.500A5 5 0 0 1 5.500 8.300Q6.500 2 12 2q5.500 0 6.500 6a5 5 0 0 1-.5 10H16" />
          <path d="M5.500 9q5.500-1 6 4.500" />
        </svg>
      </span>
      <span className="flex-1 self-center whitespace-nowrap pl-[12px] text-left text-[14px] font-bold leading-4 text-[#222]">夸克网盘</span>
      <span className="flex w-[13px] shrink-0 items-center justify-center self-end rounded-tl-[6px] bg-[#fdeac2] py-[2px]">
        <svg viewBox="0 0 6 9" className="h-[9px] w-[6px]"><path fill="#a8640f" d="M2 0h4L4.500 3H6L1.500 9 2.500 5H0z" /></svg>
      </span>
    </button>
  );
}

function VideoMark() {
  return (
    <div className="pointer-events-none absolute bottom-0 right-[3px] flex h-[68px] text-white">
      <svg viewBox="0 0 168 64" className="h-[64px] w-[168px] self-end" fill="#fff" aria-hidden="true">
        {[0, 88].map((x) => (
          <g key={x} transform={`translate(${x} 0)`}>
            <path fillRule="evenodd" d="M0 10L9 9l4 27q30-2 32 10Q43 58 20 63l-14 1Q4 40 0 10zM18 44l2 12 11-7z" />
            <path d="M43 28l9-1 4 33-7 1zM59 12l7-1 3 47-7 1zM70 29l9-1v33h-8z" />
            <path d="M41 14l4-1 3 10-3 1zM48 13l3-1 1 11-3 0zM69 13l4 0v11h-3zM76 13l3 0v11h-3z" />
          </g>
        ))}
      </svg>
      <span className="whitespace-nowrap pl-[8px] text-[56px] leading-[64px]">云之窗</span>
    </div>
  );
}

export default function App() {
  return (
    <div className="relative flex h-screen flex-col overflow-hidden bg-[#2b3b58] font-['Noto_Sans','Noto_Sans_CJK_SC',sans-serif]">
      <TitleBar />
      <MenuBar />
      <Toolbars />
      <main className="flex min-h-0 flex-1 gap-[4px] bg-[#2c3c5a]">
        <LeftDock />
        <div className="flex min-w-0 flex-1 flex-col gap-[4px]">
          <div className="flex min-h-0 flex-1 gap-[4px]">
            {/* empty editor workspace */}
            <div className="min-w-0 flex-1 border-2 border-b-white border-l-[#8f98a6] border-r-white border-t-[#5c6676] bg-[#30415f]" />
            <RightDock />
          </div>
          <ProgressPanel />
        </div>
      </main>
      <StatusBar />
      <div className="h-[3px] shrink-0 bg-linear-to-r from-[#cfe6f0] via-[#e4e0ec] to-[#f0dcd8]" />
      <SiteMark />
      <QuarkBadge />
      <VideoMark />
    </div>
  );
}
